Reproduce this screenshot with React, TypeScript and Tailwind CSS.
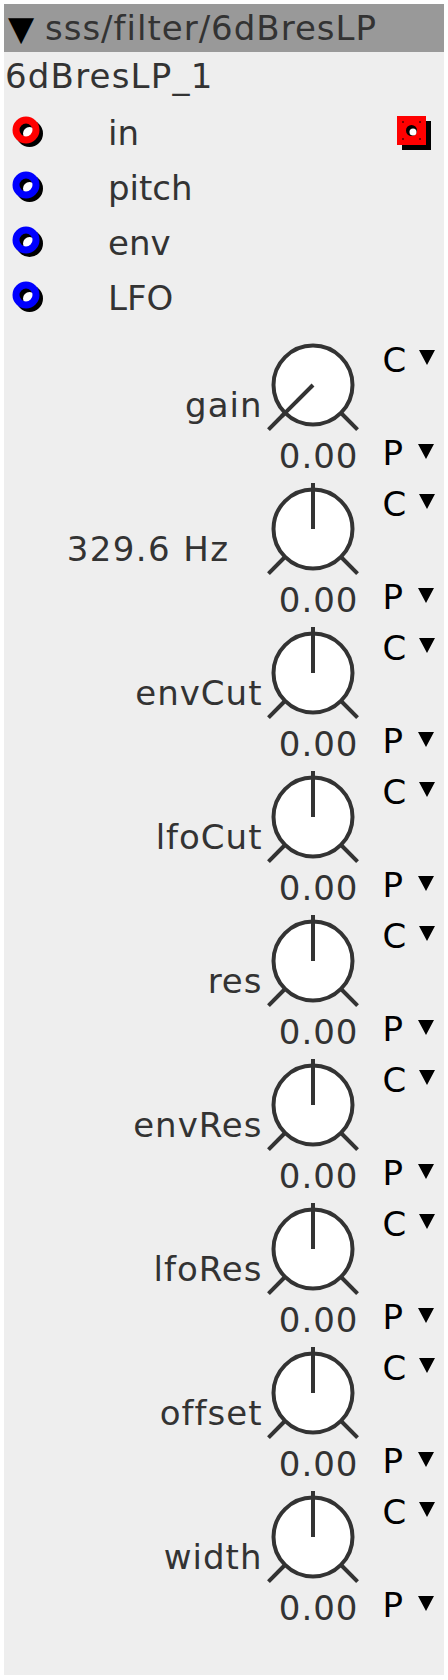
import React from 'react';

const FONT = { fontFamily: '"DejaVu Sans", "Liberation Sans", sans-serif' };

const inlets = [
  { name: 'in', color: '#ff0000' },
  { name: 'pitch', color: '#0000ff' },
  { name: 'env', color: '#0000ff' },
  { name: 'LFO', color: '#0000ff' },
];

const knobs = [
  { label: 'gain', angle: -135, value: '0.00' },
  { label: '329.6 Hz', angle: 0, value: '0.00', shifted: true },
  { label: 'envCut', angle: 0, value: '0.00' },
  { label: 'lfoCut', angle: 0, value: '0.00' },
  { label: 'res', angle: 0, value: '0.00' },
  { label: 'envRes', angle: 0, value: '0.00' },
  { label: 'lfoRes', angle: 0, value: '0.00' },
  { label: 'offset', angle: 0, value: '0.00' },
  { label: 'width', angle: 0, value: '0.00' },
];

const Jack = ({ color }: { color: string }) => (
  <svg width="34" height="34" viewBox="0 0 34 34" className="block">
    <circle cx="17.5" cy="17.5" r="13.5" fill="#000" />
    <circle cx="17.5" cy="17.5" r="6.5" fill="#fff" />
    <circle cx="14" cy="14" r="10" fill="none" stroke={color} strokeWidth="7" />
  </svg>
);

const Outlet = () => (
  <svg width="36" height="36" viewBox="0 0 36 36" className="block">
    <rect x="5" y="5" width="29" height="29" fill="#000" />
    <rect x="0" y="0" width="29" height="29" fill="#ff0000" />
    <circle cx="14.5" cy="14.5" r="5.5" fill="#000" />
    <circle cx="16" cy="16" r="3.5" fill="#fff" />
    <rect x="5" y="5" width="2" height="2" fill="#800000" />
    <rect x="22" y="5" width="2" height="2" fill="#800000" />
    <rect x="5" y="22" width="2" height="2" fill="#800000" />
    <rect x="22" y="22" width="2" height="2" fill="#800000" />
  </svg>
);

const Knob = ({ angle }: { angle: number }) => {
  const cx = 50;
  const cy = 49;
  const rad = (angle * Math.PI) / 180;
  const len = angle === 0 ? 46 : 44;
  const tick = (a: number) => {
    const r = (a * Math.PI) / 180;
    return {
      x1: cx + 40 * Math.sin(r),
      y1: cy - 40 * Math.cos(r),
      x2: cx + 63 * Math.sin(r),
      y2: cy - 63 * Math.cos(r),
    };
  };
  const l = tick(-135);
  const r = tick(135);
  return (
    <svg width="100" height="100" viewBox="0 0 100 100" className="block">
      <line {...l} stroke="#333" strokeWidth="4" />
      <line {...r} stroke="#333" strokeWidth="4" />
      <circle cx={cx} cy={cy} r="39.5" fill="#fff" stroke="#333" strokeWidth="4" />
      <line
        x1={cx}
        y1={cy}
        x2={cx + len * Math.sin(rad)}
        y2={cy - len * Math.cos(rad)}
        stroke="#333"
        strokeWidth="4"
      />
    </svg>
  );
};

const Caret = () => (
  <svg width="16" height="15" viewBox="0 0 16 15" className="block">
    <polygon points="0,0 16,0 8,15" fill="#000" />
  </svg>
);

export default function App() {
  return (
    <div className="bg-white p-1 w-[448px] min-h-[1680px]" style={FONT}>
      <div className="w-[440px] h-[1671px] bg-[#eeeeee] text-[34px] text-[#333333]">
        <div className="h-[48px] leading-[48px] bg-[#999999] pl-[4px] whitespace-nowrap">
          <span className="text-black">▼</span>{' '}
          <span className="tracking-[1px]">sss/filter/6dBresLP</span>
        </div>
        <div className="h-[48px] leading-[48px] pl-[1px] tracking-[1.2px]">6dBresLP_1</div>

        <div className="pt-[6px]">
          {inlets.map((p, i) => (
            <div key={p.name} className="h-[55px] flex items-start">
              <div className="w-[104px] pl-[8px] pt-[10px] shrink-0">
                <Jack color={p.color} />
              </div>
              <div className="flex-1 leading-[55px]">{p.name}</div>
              {i === 0 && (
                <div className="w-[47px] pt-[10px] shrink-0">
                  <Outlet />
                </div>
              )}
            </div>
          ))}
        </div>

        <div className="pt-[10px]">
          {knobs.map((k) => (
            <div key={k.label} className="h-[144px] flex items-start">
              <div
                className={`flex-1 text-right leading-[40px] pt-[49px] whitespace-nowrap ${
                  k.shifted ? 'pr-[33px] tracking-[1.4px]' : 'pr-[0px] tracking-[1px]'
                }`}
              >
                {k.label}
              </div>
              <div className="w-[100px] shrink-0">
                <Knob angle={k.angle} />
                <div className="leading-[40px] text-right pr-[4px] tracking-[1px]">{k.value}</div>
              </div>
              <div className="w-[81.5px] shrink-0 pl-[20px] text-black">
                <div className="h-[97px] pt-[4px] flex items-start">
                  <span className="leading-[40px]">C</span>
                  <span className="ml-[13px] mt-[10px]">
                    <Caret />
                  </span>
                </div>
                <div className="flex items-start">
                  <span className="leading-[40px]">P</span>
                  <span className="ml-[15px] mt-[11px]">
                    <Caret />
                  </span>
                </div>
              </div>
            </div>
          ))}
        </div>
      </div>
    </div>
  );
}
